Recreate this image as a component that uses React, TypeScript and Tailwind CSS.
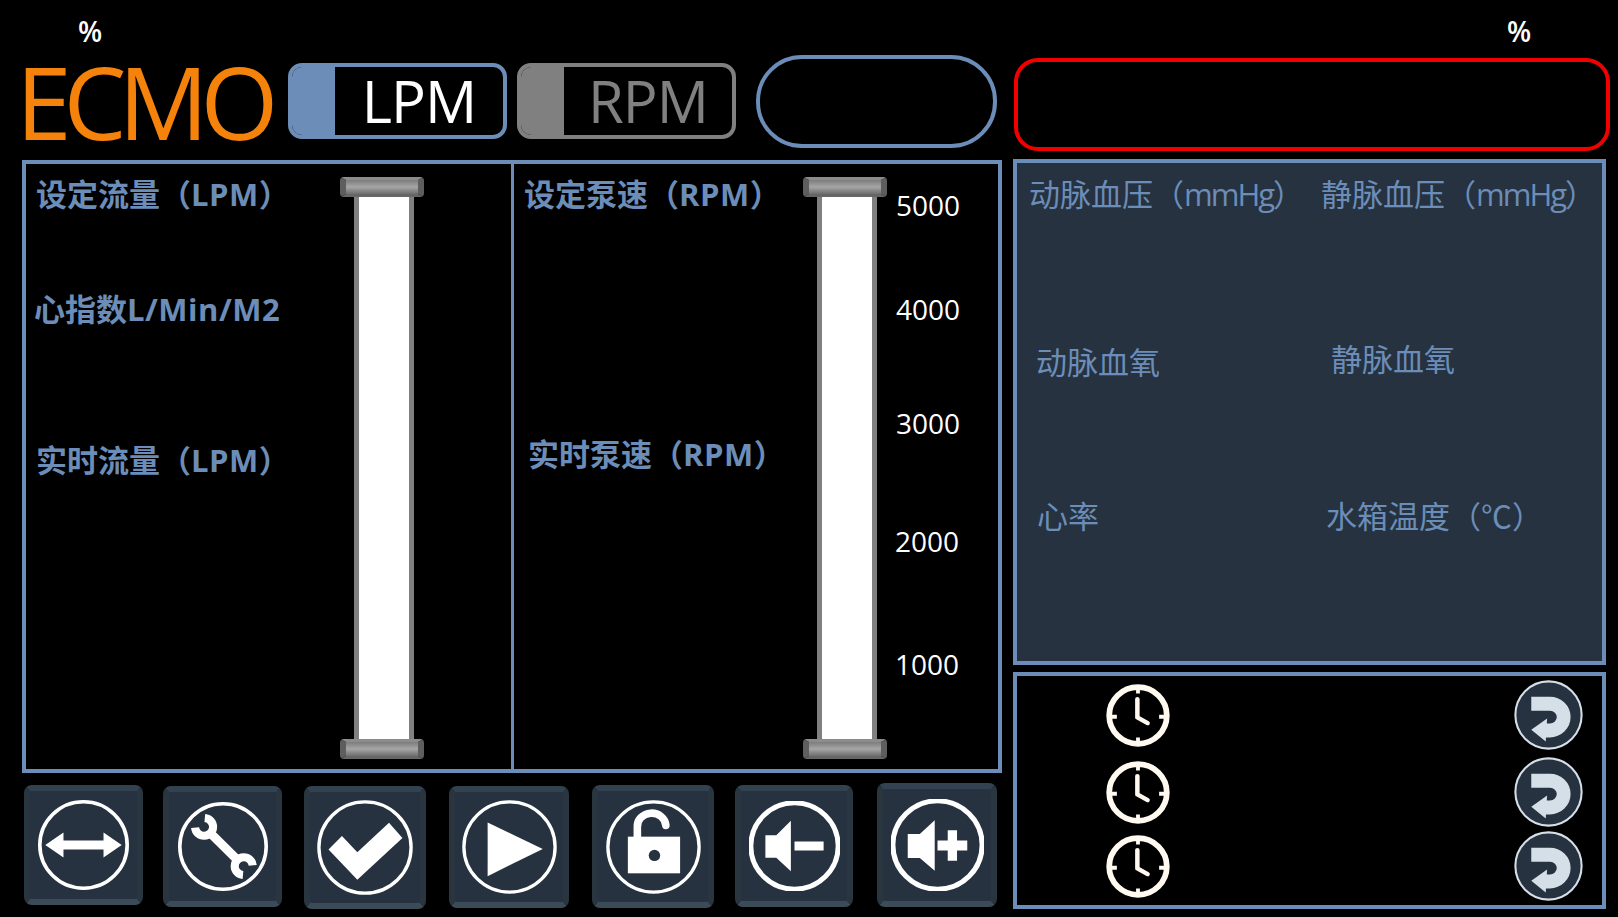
import React from 'react';

const fontStack = "font-['Open_Sans','Noto_Sans_CJK_SC',sans-serif]";

const Slider: React.FC = () => (
  <div className="flex flex-col items-center w-[84px] h-full">
    <div className="w-[84px] h-[20px] shrink-0 rounded-[4px] border-x-[6px] border-t-[3px] border-b-[3px] border-x-[#5e5e5e] border-t-[#8c8c8c] border-b-[#666666] bg-gradient-to-b from-[#7c7c7c] via-[#a6a6a6] to-[#6e6e6e]" />
    <div className="w-[60px] ml-[3px] flex-1 bg-white border-x-[5px] border-[#808080]" />
    <div className="w-[84px] h-[20px] shrink-0 rounded-[4px] border-x-[6px] border-t-[3px] border-b-[3px] border-x-[#5e5e5e] border-t-[#8c8c8c] border-b-[#666666] bg-gradient-to-b from-[#7c7c7c] via-[#a6a6a6] to-[#6e6e6e]" />
  </div>
);

const Ring: React.FC<{ className: string; weight: number; children: React.ReactNode }> = ({ className, weight, children }) => (
  <svg viewBox="0 0 100 100" preserveAspectRatio="none" className={className}>
    <ellipse cx="50" cy="50" rx="48" ry="48" fill="none" stroke="white" strokeWidth={weight} />
    {children}
  </svg>
);

const buttons = [
  {
    box: 'w-[119px] h-[120px] ml-[2px]',
    ring: 'w-[91px] h-[90px]',
    weight: 4,
    icon: <polygon fill="white" points="8,50 28,36 28,45 72,45 72,36 92,50 72,64 72,55 28,55 28,64" />,
  },
  {
    box: 'w-[119px] h-[121px] ml-[20px] mt-[1px]',
    ring: 'w-[90px] h-[89px]',
    weight: 4,
    icon: (
      <g fill="none" stroke="white">
        <path d="M34 33 L68 67" strokeWidth="10" />
        <path d="M29.8 18 A10 10 0 1 1 19 28.8" strokeWidth="9" />
        <path d="M72.2 82 A10 10 0 1 1 83 71.2" strokeWidth="9" />
      </g>
    ),
  },
  {
    box: 'w-[122px] h-[123px] ml-[22px] mt-[1px]',
    ring: 'w-[96px] h-[95px]',
    weight: 3.5,
    icon: <polygon fill="white" points="12,52 26,38 42,55 75,24 89,40 42,84" />,
  },
  {
    box: 'w-[120px] h-[122px] ml-[23px] mt-[1px]',
    ring: 'w-[95px] h-[94px]',
    weight: 3.5,
    icon: <polygon fill="white" points="27,24 85,52 27,81" />,
  },
  {
    box: 'w-[122px] h-[123px] ml-[23px]',
    ring: 'w-[95px] h-[94px]',
    weight: 3.5,
    icon: (
      <>
        <path d="M33 39 V29 A15 14 0 0 1 63 27" fill="none" stroke="white" strokeWidth="8" strokeLinecap="round" />
        <rect x="23" y="39" width="55" height="39" fill="white" />
        <ellipse cx="51" cy="59" rx="6" ry="6" fill="#26323f" />
      </>
    ),
  },
  {
    box: 'w-[118px] h-[122px] ml-[21px]',
    ring: 'w-[91px] h-[90px]',
    weight: 5.5,
    icon: (
      <>
        <polygon fill="white" points="18,38 30,38 46,22 46,78 30,63 18,63" />
        <rect x="50" y="45" width="32" height="10" fill="white" />
      </>
    ),
  },
  {
    box: 'w-[120px] h-[124px] ml-[24px] -mt-[2px]',
    ring: 'w-[93px] h-[92px]',
    weight: 5.5,
    icon: (
      <>
        <polygon fill="white" points="18,38 31,38 47,23 47,78 31,64 18,64" />
        <path d="M50 45 H61 V34 H71 V45 H82 V56 H71 V67 H61 V56 H50 Z" fill="white" />
      </>
    ),
  },
];

const Clock: React.FC = () => (
  <svg viewBox="0 0 100 100" preserveAspectRatio="none" className="w-[64px] h-[63px]">
    <g fill="none" stroke="#fff9f0">
      <ellipse cx="50" cy="50" rx="45" ry="45" strokeWidth="9" />
      <path d="M50 5 V15 M50 85 V95 M5 52 H17 M83 52 H95" strokeWidth="6" />
      <path d="M49 24 V53 L65 62" strokeWidth="7" strokeLinecap="round" strokeLinejoin="round" />
    </g>
  </svg>
);

const Undo: React.FC = () => (
  <svg viewBox="0 0 100 100" preserveAspectRatio="none" className="w-[69px] h-[70px]">
    <ellipse cx="50" cy="50" rx="48" ry="48" fill="#26323f" stroke="#d5dfe8" strokeWidth="3" />
    <path d="M25 34 H52 A20 19 0 0 1 52 72 H44" fill="none" stroke="#d5dfe8" strokeWidth="20" />
    <polygon fill="#d5dfe8" points="25,71 48,55 46,88" />
  </svg>
);

const App: React.FC = () => {
  return (
    <div className={`w-[1618px] h-[917px] bg-black flex overflow-hidden ${fontStack}`}>
      <div className="w-[980px] ml-[22px] shrink-0 flex flex-col">
        <div className="h-[55px] pt-[14px] pl-[56px] text-white font-semibold text-[28px] leading-[34px]">%</div>

        <div className="h-[105px] flex items-start">
          <div className="w-[266px] -ml-[6px] mr-[6px] mt-[1px] text-[#f5820a] text-[100px] leading-[90px] tracking-[-8px]">ECMO</div>
          <div className="w-[219px] h-[76px] mt-[8px] flex rounded-[14px] border-[4px] border-[#6b8db8]">
            <div className="w-[43px] bg-[#6b8db8] rounded-l-[10px]" />
            <div className="flex-1 text-center text-white text-[58px] leading-[68px] tracking-[-1px]">LPM</div>
          </div>
          <div className="w-[219px] h-[76px] ml-[10px] mt-[8px] flex rounded-[14px] border-[4px] border-[#808080]">
            <div className="w-[43px] bg-[#808080] rounded-l-[10px]" />
            <div className="flex-1 text-center text-[#808080] text-[58px] leading-[68px] tracking-[-1px]">RPM</div>
          </div>
          <div className="w-[241px] h-[93px] ml-[20px] rounded-[46px] border-[4px] border-[#6b8db8]" />
        </div>

        <div className="h-[613px] border-[4px] border-[#6b8db8] flex text-[#6b8db8] font-bold text-[31px] leading-[40px]">
          <div className="w-[485px] flex pt-[13px] pb-[10px]">
            <div className="w-[314px] -mt-[3px] pl-[10px]">
              <div>设定流量（<span className="tracking-[0.5px]">LPM</span>）</div>
              <div className="mt-[75px] -ml-[2px]">心指数<span className="tracking-[0.5px]">L/Min/M2</span></div>
              <div className="mt-[111px]">实时流量（<span className="tracking-[0.5px]">LPM</span>）</div>
            </div>
            <Slider />
          </div>
          <div className="flex-1 border-l-[3px] border-[#6b8db8] flex pt-[13px] pb-[10px]">
            <div className="w-[289px] -mt-[3px] pl-[10px]">
              <div>设定泵速（<span className="tracking-[0.5px]">RPM</span>）</div>
              <div className="mt-[220px] ml-[4px]">实时泵速（<span className="tracking-[0.5px]">RPM</span>）</div>
            </div>
            <Slider />
            <div className="ml-[9px] -mt-[2px] text-white font-normal text-[28px]">
              <div className="mt-[10px]">5000</div>
              <div className="mt-[64px]">4000</div>
              <div className="mt-[74px]">3000</div>
              <div className="mt-[78px] -ml-[1px]">2000</div>
              <div className="mt-[83px] -ml-[1px]">1000</div>
            </div>
          </div>
        </div>

        <div className="flex items-start mt-[12px]">
          {buttons.map((b, i) => (
            <div
              key={i}
              className={`${b.box} shrink-0 flex items-center justify-center rounded-[8px] bg-[#26323f] border-[6px] border-t-[#334250] border-b-[#3c4b58] border-x-[#29363f]`}
            >
              <Ring className={`${b.ring} shrink-0`} weight={b.weight}>{b.icon}</Ring>
            </div>
          ))}
        </div>
      </div>

      <div className="w-[597px] ml-[11px] shrink-0 flex flex-col">
        <div className="h-[58px] pt-[14px] pl-[494px] text-white font-semibold text-[28px] leading-[34px]">%</div>
        <div className="h-[93px] w-[596px] ml-[1px] rounded-[24px] border-[4px] border-[#f20000]" />

        <div className="w-[593px] h-[506px] mt-[8px] bg-[#26323f] border-[4px] border-[#6b8db8] text-[#6b8db8] text-[31px] leading-[40px]">
          <div className="grid grid-cols-[304px_1fr] pt-[11px]">
            <div className="pl-[12px]">动脉血压（<span className="tracking-[-2px]">mmHg</span>）</div>
            <div>静脉血压（<span className="tracking-[-2px]">mmHg</span>）</div>
          </div>
          <div className="grid grid-cols-[304px_1fr] mt-[125px]">
            <div className="pl-[19px] mt-[3px]">动脉血氧</div>
            <div className="pl-[10px]">静脉血氧</div>
          </div>
          <div className="grid grid-cols-[304px_1fr] mt-[114px]">
            <div className="pl-[20px]">心率</div>
            <div className="pl-[5px]">水箱温度（℃）</div>
          </div>
        </div>

        <div className="w-[593px] h-[237px] mt-[7px] border-[4px] border-[#6b8db8] pt-[4px] pl-[89px] pr-[19px]">
          <div className="flex items-center justify-between">
            <Clock />
            <Undo />
          </div>
          <div className="flex items-center justify-between mt-[7px]">
            <Clock />
            <Undo />
          </div>
          <div className="flex items-center justify-between mt-[4px]">
            <Clock />
            <Undo />
          </div>
        </div>
      </div>
    </div>
  );
};

export default App;
